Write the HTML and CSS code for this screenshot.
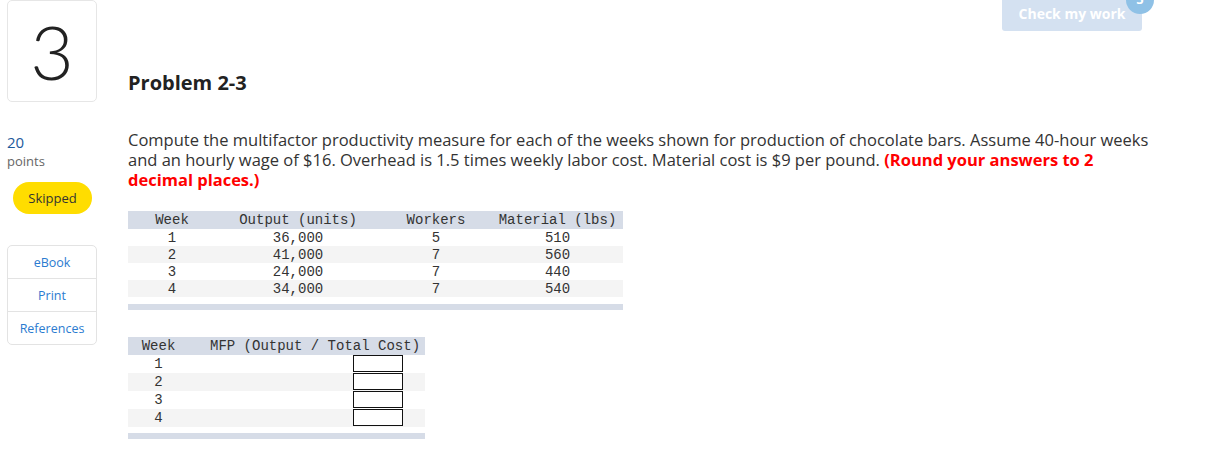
FILE: index.html
```html
<!DOCTYPE html>
<html>
<head>
<meta charset="utf-8">
<link rel="stylesheet" href="styles.css">
</head>
<body>
<div class="page">
  <aside class="side">
    <div class="numbox">3</div>
    <div class="pts">20</div>
    <div class="pts-label">points</div>
    <div class="pill">Skipped</div>
    <div class="tools">
      <div class="tool">eBook</div>
      <div class="tool">Print</div>
      <div class="tool">References</div>
    </div>
  </aside>
  <main class="main">
    <div class="topbar">
      <div class="check">Check my work<span class="badge">5</span></div>
    </div>
    <h1 class="title">Problem 2-3</h1>
    <p class="prompt">Compute the multifactor productivity measure for each of the weeks shown for production of chocolate bars. Assume 40-hour weeks and an hourly wage of $16. Overhead is 1.5 times weekly labor cost. Material cost is $9 per pound. <b class="red">(Round your answers to 2 decimal places.)</b></p>

    <div class="tblwrap t1">
      <table class="data">
        <colgroup><col class="c1"><col class="c2"><col class="c3"><col class="c4"></colgroup>
        <thead><tr><th>Week</th><th>Output (units)</th><th>Workers</th><th>Material (lbs)</th></tr></thead>
        <tbody>
          <tr><td>1</td><td>36,000</td><td>5</td><td>510</td></tr>
          <tr class="alt"><td>2</td><td>41,000</td><td>7</td><td>560</td></tr>
          <tr><td>3</td><td>24,000</td><td>7</td><td>440</td></tr>
          <tr class="alt"><td>4</td><td>34,000</td><td>7</td><td>540</td></tr>
        </tbody>
      </table>
      <div class="tbar"></div>
    </div>

    <div class="tblwrap t2">
      <table class="data ans">
        <colgroup><col class="d1"><col class="d2"></colgroup>
        <thead><tr><th>Week</th><th class="mfp">MFP (Output / Total Cost)</th></tr></thead>
        <tbody>
          <tr><td>1</td><td class="inp"><input type="text"></td></tr>
          <tr class="alt"><td>2</td><td class="inp"><input type="text"></td></tr>
          <tr><td>3</td><td class="inp"><input type="text"></td></tr>
          <tr class="alt"><td>4</td><td class="inp"><input type="text"></td></tr>
        </tbody>
      </table>
      <div class="tbar"></div>
    </div>
  </main>
</div>
</body>
</html>
```

FILE: styles.css
```css
html, body { margin: 0; padding: 0; background: #fff; }
body { font-family: "Open Sans", "Lato", sans-serif; color: #333; overflow: hidden; }

.page {
  display: grid;
  grid-template-columns: 90px 1fr;
  column-gap: 31px;
  padding-left: 7px;
}

.side { display: flex; flex-direction: column; align-items: flex-start; }
.numbox {
  box-sizing: border-box;
  width: 90px; height: 102px;
  border: 1px solid #e6e6e6; border-radius: 5px;
  display: flex; align-items: center; justify-content: center;
  font-family: "Lato", sans-serif;
  font-size: 75px; font-weight: 300; color: #222; line-height: 1;
}
.pts { margin-top: 30px; font-size: 15px; line-height: 20px; color: #1d5a9c; }
.pts-label { font-size: 13px; line-height: 18px; color: #666; }
.pill {
  margin-top: 12px; margin-left: 6px;
  width: 79px; height: 32px; border-radius: 16px;
  background: #ffdd00; color: #333; font-size: 13px;
  display: flex; align-items: center; justify-content: center;
}
.tools {
  margin-top: 31px; box-sizing: border-box; width: 90px;
  border: 1px solid #e3e3e3; border-radius: 5px;
}
.tool {
  height: 32px; display: flex; align-items: center; justify-content: center;
  font-size: 12.5px; color: #2b7bd0;
}
.tool + .tool { border-top: 1px solid #e3e3e3; }

.main { padding-right: 50px; }
.topbar { display: flex; justify-content: flex-end; height: 31px; padding-right: 18px; }
.check {
  position: relative;
  width: 140px; height: 31px; border-radius: 0 0 3px 3px;
  background: #d4e1f1; color: #fff; font-weight: 700; font-size: 14px;
  display: flex; align-items: center; justify-content: center;
  padding-bottom: 5px; box-sizing: border-box;
}
.badge {
  position: absolute; right: -12px; top: -14px;
  width: 28px; height: 28px; border-radius: 50%;
  background: #8fc1e6; color: #fff; font-size: 13px; font-weight: 700;
  display: flex; align-items: flex-end; justify-content: center; padding-bottom: 6px; box-sizing: border-box;
}

.title { margin: 39px 0 0; font-size: 20px; line-height: 25px; font-weight: 700; color: #222; }
.prompt { margin: 35px 0 0; font-size: 16.5px; line-height: 20px; color: #333; }
.red { color: #f00; }

.tblwrap { margin-top: 21px; }
.t1 { width: 495px; }
.t2 { width: 297px; margin-top: 27px; }
.data {
  border-collapse: collapse; width: 100%; table-layout: fixed;
  font-family: "Liberation Mono", "Courier New", monospace; font-size: 14px; color: #333;
}
.data th, .data td { padding: 0; text-align: center; font-weight: 400; white-space: nowrap; }
.data thead tr { background: #d6dce7; height: 18px; }
.data tbody tr { height: 17px; }
.data tr.alt { background: #f4f4f4; }
.c1 { width: 88px; } .c2 { width: 164px; } .c3 { width: 112px; } .c4 { width: 131px; }
.d1 { width: 61px; } .d2 { width: 236px; }
.ans tbody tr { height: 18px; }
.ans th.mfp { text-align: left; padding-left: 21px; overflow: visible; }
.ans td.inp { text-align: right; padding-right: 22px; line-height: 0; vertical-align: top; }
.ans input {
  box-sizing: border-box; width: 50px; height: 17px; margin: 0;
  border: 1px solid #111; background: #fff; padding: 0;
}
.tbar { height: 6px; background: #d6dce7; margin-top: 7px; }
.t2 .tbar { margin-top: 6px; }
```
